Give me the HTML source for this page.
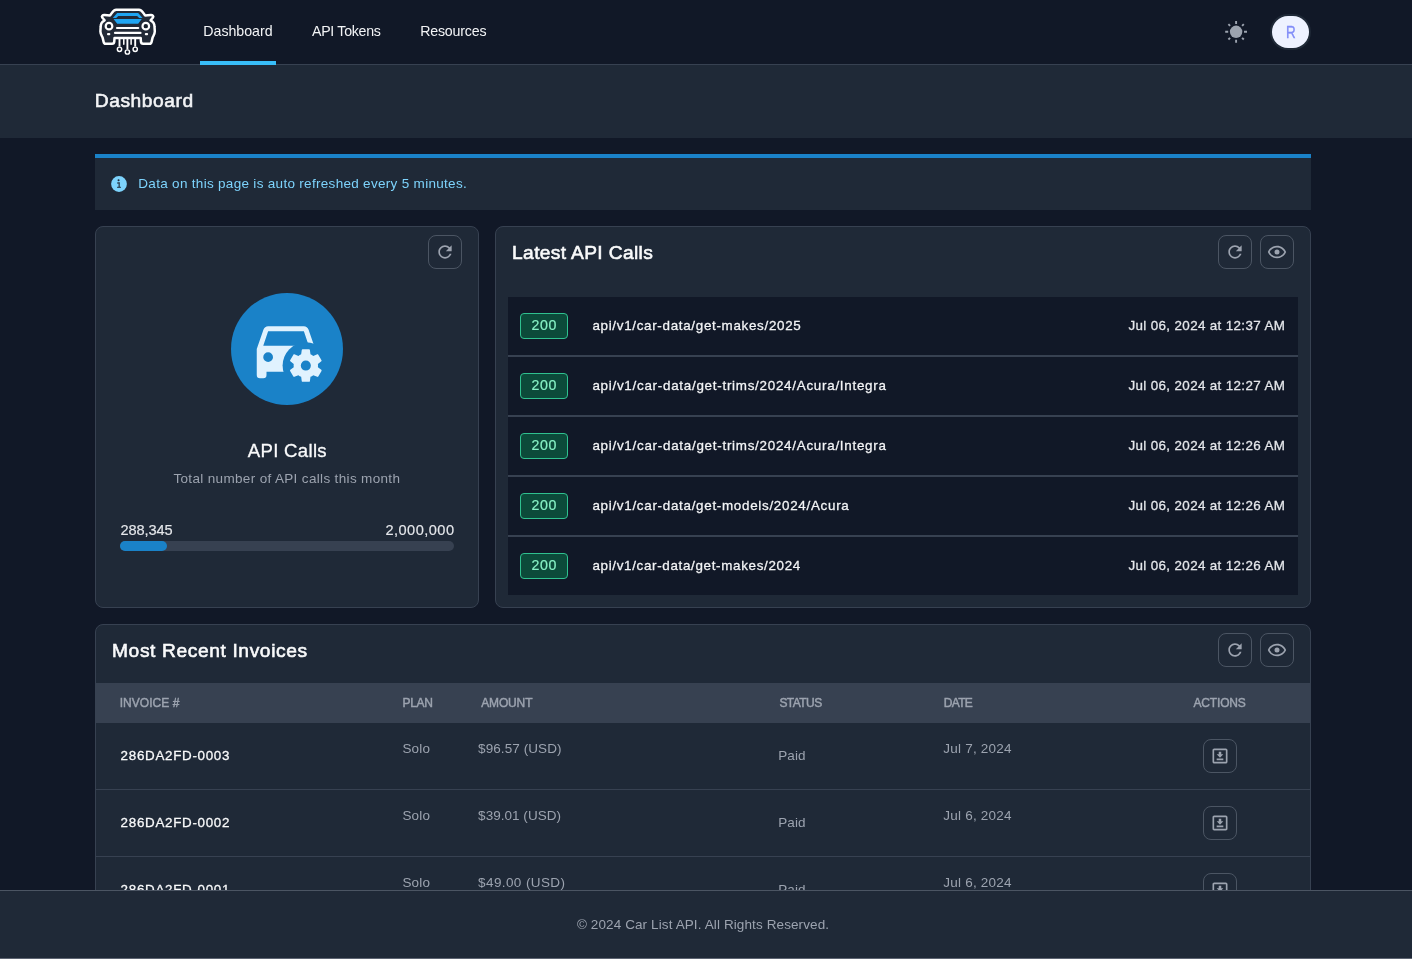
<!DOCTYPE html>
<html><head><meta charset="utf-8"><title>Dashboard</title>
<style>
*{box-sizing:border-box;margin:0;padding:0}
html,body{width:1412px;height:959px;overflow:hidden;background:#111827;font-family:"Liberation Sans",sans-serif;color:#f3f4f6}
body{position:relative}
.a{position:absolute}
.t{position:absolute;white-space:nowrap}
nav{position:absolute;left:0;top:0;width:1412px;height:65px;background:#111827;border-bottom:1px solid #374151}
.hdr{position:absolute;left:0;top:65px;width:1412px;height:73px;background:#1f2937}
.card{position:absolute;background:#1f2937;border:1px solid #374151;border-radius:8px}
.btn{position:absolute;width:34px;height:34px;border:1px solid #4b5563;border-radius:8px}
.btn svg{position:absolute;left:6px;top:6px;width:20px;height:20px;fill:#9ca3af}
.row{position:absolute;left:508px;width:790px;height:58px;background:#111827}
.div{position:absolute;left:508px;width:790px;height:2px;background:#374151}
.badge{position:absolute;left:520px;width:48px;height:26px;border:1px solid #2fc08f;background:#0c4a3a;border-radius:4px}
.hr{position:absolute;left:96px;width:1214px;height:1px;background:#374151}
footer{position:absolute;left:0;top:890px;width:1412px;height:69px;background:#1f2937;border-top:1px solid #4b5563;border-bottom:1px solid #5d6472;z-index:5}

</style></head><body>
<nav></nav>
<svg class="a" style="left:94px;top:4px" width="68" height="56" viewBox="0 0 68 56">
  <path d="M22.2 5.8H45C48 5.8 49.200 9 51.200 11.500L56.600 11.100C58.800 10.900 59.800 12.500 59 13.500L56.600 16.300C59 17.500 60.500 20 60.500 22.400L60.800 27.500C60.800 30 59.400 31.800 58.600 33.600L57.700 37.400C57.400 39 56.800 39.800 55.500 39.800H49.100C47.800 39.800 47 39 46.900 37.400L46.700 34H20.500L20.300 37.400C20.200 39 19.400 39.800 18.100 39.800H11.700C10.400 39.800 9.800 39 9.500 37.400L8.600 33.600C7.800 31.800 6.400 30 6.400 27.500L6.700 22.400C6.700 20 8.200 17.500 10.600 16.300L8.200 13.500C7.400 12.500 8.400 10.900 10.600 11.100L16 11.500C18 9 19.200 5.800 22.200 5.800Z" fill="#222a37" stroke="#fff" stroke-width="2.5" stroke-linejoin="round"/>
  <path d="M18.800 14L23.200 9H44.200L48.500 14L44.200 19.800H23.200Z" fill="#1fa5f2"/>
  <path d="M24.300 11.900H43.100L45.200 13.900H48.700V15.100H18.600V13.900H22.200Z" fill="#222a37"/>
  <circle cx="15" cy="22.150" r="3.300" fill="#18202b" stroke="#fff" stroke-width="2.200"/>
  <circle cx="51.800" cy="22.150" r="3.300" fill="#18202b" stroke="#fff" stroke-width="2.200"/>
  <rect x="21.900" y="22.900" width="23.400" height="2.200" rx="1.100" fill="#fff"/>
  <rect x="19.900" y="27.800" width="27.700" height="2.300" rx="1.150" fill="#fff"/>
  <rect x="13" y="29" width="3.300" height="2.300" rx="1" fill="#fff"/>
  <rect x="50.800" y="29" width="3.300" height="2.300" rx="1" fill="#fff"/>
  <g stroke="#fff" fill="none">
    <path d="M25.500 34V42.600M33.400 34V45.200M41.200 34V42.600" stroke-width="1.900"/>
    <path d="M29.800 34V40.200M37.100 34V40.200" stroke-width="1.500" stroke-linecap="round"/>
    <circle cx="25.500" cy="45.300" r="2.150" stroke-width="1.450"/>
    <circle cx="33.400" cy="48" r="2.150" stroke-width="1.450"/>
    <circle cx="41.200" cy="45.300" r="2.150" stroke-width="1.450"/>
  </g>
</svg>
<div class="a" style="left:200px;top:61px;width:76px;height:4px;background:#38bdf8"></div>
<!-- sun -->
<svg class="a" style="left:1224px;top:20px" width="24" height="24" viewBox="0 0 24 24">
  <circle cx="12.1" cy="11.8" r="6.2" fill="#9ca3af"/>
  <g stroke="#9ca3af" stroke-width="1.9">
    <path d="M12.1 0.9V3.9M12.1 19.7V22.7M1.2 11.8H4.2M20 11.8H23M4.4 4.1L6.1 5.8M18.1 17.8L19.8 19.5M4.4 19.5L6.1 17.8M18.1 5.8L19.8 4.1"/>
  </g>
</svg>
<!-- avatar -->
<div class="a" style="left:1270px;top:14px;width:41px;height:36px;border-radius:18px;background:#1f2937"></div>
<div class="a" style="left:1272px;top:16px;width:37px;height:32px;border-radius:16px;background:#eef2ff"></div>

<div class="hdr"></div>

<!-- alert -->
<div class="a" style="left:95px;top:154px;width:1216px;height:56px;background:#1f2937;border-top:4px solid #1a82c8"></div>
<svg class="a" style="left:111px;top:176px" width="16" height="16" viewBox="0 0 16 16">
  <circle cx="8" cy="8" r="7.9" fill="#7dd3fc"/>
  <g fill="#1f2937"><circle cx="7.55" cy="4.3" r="1"/><path d="M7.4 6.3h1.6v4.7h-1.6z" opacity=".72"/><path d="M6 6.5h2.2v1h-2.200z"/><path d="M6.100 10.800h3.800v1h-3.800z"/></g>
</svg>

<!-- left card -->
<div class="card" style="left:95px;top:226px;width:384px;height:382px"></div>
<div class="btn" style="left:428px;top:235px"><svg viewBox="0 0 24 24"><path d="M17.65 6.35C16.2 4.9 14.21 4 12 4c-4.42 0-7.99 3.58-7.99 8s3.57 8 7.99 8c3.73 0 6.84-2.55 7.73-6h-2.08c-.82 2.33-3.04 4-5.65 4-3.31 0-6-2.690-6-6s2.690-6 6-6c1.660 0 3.140.69 4.220 1.780L13 11h7V4l-2.350 2.350z"/></svg></div>
<div class="a" style="left:231px;top:293px;width:112px;height:112px;border-radius:56px;background:#1a82c8"></div>
<svg class="a" style="left:247.3px;top:310.2px" width="78" height="78" viewBox="0 0 24 24">
  <defs><mask id="cm"><rect width="24" height="24" fill="#fff"/><circle cx="18.1" cy="17.1" r="7.15" fill="#000"/></mask></defs>
  <path mask="url(#cm)" fill="#e0f2fe" fill-rule="evenodd" d="M5,11L6.5,6.500H17.500L19,11M17.500,16A1.500,1.500 0 0,1 16,14.500A1.500,1.500 0 0,1 17.500,13A1.500,1.500 0 0,1 19,14.500A1.500,1.500 0 0,1 17.500,16M6.500,16A1.500,1.500 0 0,1 5,14.500A1.500,1.500 0 0,1 6.500,13A1.500,1.500 0 0,1 8,14.500A1.500,1.500 0 0,1 6.500,16M18.920,6C18.720,5.420 18.160,5 17.500,5H6.500C5.840,5 5.280,5.420 5.080,6L3,12V20A1,1 0 0,0 4,21H5A1,1 0 0,0 6,20V19H18V20A1,1 0 0,0 19,21H20A1,1 0 0,0 21,20V12L18.920,6Z"/>
  <g transform="translate(12.1 11.1) scale(0.5)">
    <path fill="#e0f2fe" fill-rule="evenodd" d="M12,15.100A3.100,3.100 0 0,1 8.900,12A3.100,3.100 0 0,1 12,8.900A3.100,3.100 0 0,1 15.100,12A3.100,3.100 0 0,1 12,15.100M19.430,12.970C19.470,12.650 19.500,12.330 19.500,12C19.500,11.670 19.470,11.340 19.430,11L21.540,9.370C21.730,9.220 21.780,8.950 21.660,8.730L19.660,5.270C19.540,5.050 19.270,4.960 19.050,5.050L16.560,6.050C16.040,5.660 15.500,5.320 14.870,5.070L14.500,2.420C14.460,2.180 14.250,2 14,2H10C9.750,2 9.540,2.180 9.500,2.420L9.130,5.070C8.500,5.320 7.960,5.660 7.440,6.050L4.950,5.050C4.730,4.960 4.460,5.050 4.340,5.270L2.340,8.730C2.210,8.950 2.270,9.220 2.460,9.370L4.570,11C4.530,11.340 4.500,11.670 4.500,12C4.500,12.330 4.530,12.650 4.570,12.970L2.460,14.630C2.270,14.780 2.210,15.050 2.340,15.270L4.340,18.730C4.460,18.950 4.730,19.030 4.950,18.950L7.440,17.940C7.960,18.340 8.500,18.680 9.130,18.930L9.500,21.580C9.540,21.820 9.750,22 10,22H14C14.250,22 14.460,21.820 14.500,21.580L14.870,18.930C15.500,18.670 16.040,18.340 16.560,17.940L19.050,18.950C19.270,19.030 19.540,18.950 19.660,18.730L21.660,15.270C21.780,15.050 21.730,14.780 21.540,14.630L19.430,12.970Z"/>
  </g>
</svg>
<div class="a" style="left:120px;top:541px;width:334px;height:10px;border-radius:5px;background:#374151"></div>
<div class="a" style="left:120px;top:541px;width:47px;height:10px;border-radius:5px;background:#1a82c8"></div>

<!-- right card -->
<div class="card" style="left:495px;top:226px;width:816px;height:382px"></div>
<div class="btn" style="left:1218px;top:235px"><svg viewBox="0 0 24 24"><path d="M17.65 6.35C16.2 4.9 14.21 4 12 4c-4.42 0-7.99 3.58-7.99 8s3.57 8 7.99 8c3.73 0 6.84-2.55 7.73-6h-2.08c-.82 2.33-3.04 4-5.65 4-3.31 0-6-2.690-6-6s2.690-6 6-6c1.660 0 3.140.69 4.220 1.780L13 11h7V4l-2.350 2.350z"/></svg></div>
<div class="btn" style="left:1260px;top:235px"><svg viewBox="0 0 24 24"><path d="M12,9A3,3 0 0,1 15,12A3,3 0 0,1 12,15A3,3 0 0,1 9,12A3,3 0 0,1 12,9M12,4.500C17,4.500 21.270,7.610 23,12C21.270,16.390 17,19.500 12,19.500C7,19.500 2.730,16.390 1,12C2.730,7.610 7,4.500 12,4.500M3.180,12C4.830,15.360 8.240,17.500 12,17.500C15.760,17.500 19.170,15.360 20.820,12C19.170,8.640 15.760,6.500 12,6.500C8.240,6.500 4.830,8.640 3.180,12Z"/></svg></div>
<div class="a" style="left:508px;top:297px;width:790px;height:298px;background:#374151"></div>
<div class="row" style="top:297px"></div><div class="row" style="top:357px"></div><div class="row" style="top:417px"></div><div class="row" style="top:477px"></div><div class="row" style="top:537px"></div>
<div class="badge" style="top:313px"></div><div class="badge" style="top:373px"></div><div class="badge" style="top:433px"></div><div class="badge" style="top:493px"></div><div class="badge" style="top:553px"></div>

<!-- invoices -->
<div class="card" style="left:95px;top:624px;width:1216px;height:400px"></div>
<div class="btn" style="left:1218px;top:633px"><svg viewBox="0 0 24 24"><path d="M17.65 6.35C16.2 4.9 14.21 4 12 4c-4.42 0-7.99 3.58-7.99 8s3.57 8 7.99 8c3.73 0 6.84-2.55 7.73-6h-2.08c-.82 2.33-3.04 4-5.65 4-3.31 0-6-2.690-6-6s2.690-6 6-6c1.660 0 3.140.69 4.220 1.780L13 11h7V4l-2.350 2.350z"/></svg></div>
<div class="btn" style="left:1260px;top:633px"><svg viewBox="0 0 24 24"><path d="M12,9A3,3 0 0,1 15,12A3,3 0 0,1 12,15A3,3 0 0,1 9,12A3,3 0 0,1 12,9M12,4.500C17,4.500 21.270,7.610 23,12C21.270,16.390 17,19.500 12,19.500C7,19.500 2.730,16.390 1,12C2.730,7.610 7,4.500 12,4.500M3.180,12C4.830,15.360 8.240,17.500 12,17.500C15.760,17.500 19.170,15.360 20.820,12C19.170,8.640 15.760,6.500 12,6.500C8.240,6.500 4.830,8.640 3.180,12Z"/></svg></div>
<div class="a" style="left:96px;top:683px;width:1214px;height:40px;background:#374151"></div>
<div class="hr" style="top:789px"></div><div class="hr" style="top:856px"></div>
<div class="btn" style="left:1203px;top:739px"><svg viewBox="0 0 24 24"><path d="M8 17V15H16V17H8M16 10L12 14L8 10H10.500V7H13.500V10H16M5 3H19C20.110 3 21 3.900 21 5V19C21 20.110 20.110 21 19 21H5C3.900 21 3 20.110 3 19V5C3 3.900 3.900 3 5 3M5 5V19H19V5H5Z"/></svg></div>
<div class="btn" style="left:1203px;top:806px"><svg viewBox="0 0 24 24"><path d="M8 17V15H16V17H8M16 10L12 14L8 10H10.500V7H13.500V10H16M5 3H19C20.110 3 21 3.900 21 5V19C21 20.110 20.110 21 19 21H5C3.900 21 3 20.110 3 19V5C3 3.900 3.900 3 5 3M5 5V19H19V5H5Z"/></svg></div>
<div class="btn" style="left:1203px;top:873px"><svg viewBox="0 0 24 24"><path d="M8 17V15H16V17H8M16 10L12 14L8 10H10.500V7H13.500V10H16M5 3H19C20.110 3 21 3.900 21 5V19C21 20.110 20.110 21 19 21H5C3.900 21 3 20.110 3 19V5C3 3.900 3.900 3 5 3M5 5V19H19V5H5Z"/></svg></div>

<div class="a" style="left:0;top:0;width:1412px;height:959px;will-change:transform;z-index:1"><div class="t" style="left:203.3px;top:24.3px;font-size:14.2px;line-height:14.2px;font-weight:400;color:#f3f4f6;letter-spacing:-0.015px;">Dashboard</div>
<div class="t" style="left:312.0px;top:24.3px;font-size:14.2px;line-height:14.2px;font-weight:400;color:#f3f4f6;letter-spacing:-0.296px;">API Tokens</div>
<div class="t" style="left:420.2px;top:24.3px;font-size:14.2px;line-height:14.2px;font-weight:400;color:#f3f4f6;letter-spacing:-0.190px;">Resources</div>
<div class="t" style="left:1286.4px;top:24.7px;font-size:16px;line-height:16px;font-weight:400;color:#818cf8;letter-spacing:0.000px;transform-origin:0 0;transform:scaleX(0.84);-webkit-text-stroke:0.35px #818cf8;">R</div>
<div class="t" style="left:94.8px;top:91.1px;font-size:19.2px;line-height:19.2px;font-weight:400;color:#f3f4f6;letter-spacing:0.551px;-webkit-text-stroke:0.6px #f3f4f6;">Dashboard</div>
<div class="t" style="left:138.3px;top:176.6px;font-size:13.5px;line-height:13.5px;font-weight:400;color:#7dd3fc;letter-spacing:0.304px;">Data on this page is auto refreshed every 5 minutes.</div>
<div class="t" style="left:247.8px;top:442.2px;font-size:18.6px;line-height:18.6px;font-weight:400;color:#f9fafb;letter-spacing:0.292px;-webkit-text-stroke:0.3px #f9fafb;">API Calls</div>
<div class="t" style="left:173.4px;top:471.6px;font-size:13.5px;line-height:13.5px;font-weight:400;color:#9ca3af;letter-spacing:0.342px;">Total number of API calls this month</div>
<div class="t" style="left:120.5px;top:522.6px;font-size:14.6px;line-height:14.6px;font-weight:400;color:#e5e7eb;letter-spacing:-0.098px;-webkit-text-stroke:0.15px #e5e7eb;">288,345</div>
<div class="t" style="left:385.4px;top:522.6px;font-size:14.6px;line-height:14.6px;font-weight:400;color:#e5e7eb;letter-spacing:0.468px;-webkit-text-stroke:0.15px #e5e7eb;">2,000,000</div>
<div class="t" style="left:512.1px;top:242.6px;font-size:19.2px;line-height:19.2px;font-weight:400;color:#f9fafb;letter-spacing:0.346px;-webkit-text-stroke:0.6px #f9fafb;">Latest API Calls</div>
<div class="t" style="left:531.4px;top:318.1px;font-size:14.2px;line-height:14.2px;font-weight:400;color:#86efc4;letter-spacing:0.660px;-webkit-text-stroke:0.2px #86efc4;">200</div>
<div class="t" style="left:592.4px;top:318.5px;font-size:13.4px;line-height:13.4px;font-weight:400;color:#f3f4f6;letter-spacing:0.691px;-webkit-text-stroke:0.28px #f3f4f6;">api/v1/car-data/get-makes/2025</div>
<div class="t" style="left:1128.5px;top:318.5px;font-size:13.4px;line-height:13.4px;font-weight:400;color:#e5e7eb;letter-spacing:0.356px;-webkit-text-stroke:0.28px #e5e7eb;">Jul 06, 2024 at 12:37 AM</div>
<div class="t" style="left:531.4px;top:378.1px;font-size:14.2px;line-height:14.2px;font-weight:400;color:#86efc4;letter-spacing:0.660px;-webkit-text-stroke:0.2px #86efc4;">200</div>
<div class="t" style="left:592.4px;top:378.5px;font-size:13.4px;line-height:13.4px;font-weight:400;color:#f3f4f6;letter-spacing:0.734px;-webkit-text-stroke:0.28px #f3f4f6;">api/v1/car-data/get-trims/2024/Acura/Integra</div>
<div class="t" style="left:1128.5px;top:378.5px;font-size:13.4px;line-height:13.4px;font-weight:400;color:#e5e7eb;letter-spacing:0.356px;-webkit-text-stroke:0.28px #e5e7eb;">Jul 06, 2024 at 12:27 AM</div>
<div class="t" style="left:531.4px;top:438.1px;font-size:14.2px;line-height:14.2px;font-weight:400;color:#86efc4;letter-spacing:0.660px;-webkit-text-stroke:0.2px #86efc4;">200</div>
<div class="t" style="left:592.4px;top:438.5px;font-size:13.4px;line-height:13.4px;font-weight:400;color:#f3f4f6;letter-spacing:0.734px;-webkit-text-stroke:0.28px #f3f4f6;">api/v1/car-data/get-trims/2024/Acura/Integra</div>
<div class="t" style="left:1128.5px;top:438.5px;font-size:13.4px;line-height:13.4px;font-weight:400;color:#e5e7eb;letter-spacing:0.356px;-webkit-text-stroke:0.28px #e5e7eb;">Jul 06, 2024 at 12:26 AM</div>
<div class="t" style="left:531.4px;top:498.1px;font-size:14.2px;line-height:14.2px;font-weight:400;color:#86efc4;letter-spacing:0.660px;-webkit-text-stroke:0.2px #86efc4;">200</div>
<div class="t" style="left:592.4px;top:498.5px;font-size:13.4px;line-height:13.4px;font-weight:400;color:#f3f4f6;letter-spacing:0.712px;-webkit-text-stroke:0.28px #f3f4f6;">api/v1/car-data/get-models/2024/Acura</div>
<div class="t" style="left:1128.5px;top:498.5px;font-size:13.4px;line-height:13.4px;font-weight:400;color:#e5e7eb;letter-spacing:0.356px;-webkit-text-stroke:0.28px #e5e7eb;">Jul 06, 2024 at 12:26 AM</div>
<div class="t" style="left:531.4px;top:558.1px;font-size:14.2px;line-height:14.2px;font-weight:400;color:#86efc4;letter-spacing:0.660px;-webkit-text-stroke:0.2px #86efc4;">200</div>
<div class="t" style="left:592.4px;top:558.5px;font-size:13.4px;line-height:13.4px;font-weight:400;color:#f3f4f6;letter-spacing:0.674px;-webkit-text-stroke:0.28px #f3f4f6;">api/v1/car-data/get-makes/2024</div>
<div class="t" style="left:1128.5px;top:558.5px;font-size:13.4px;line-height:13.4px;font-weight:400;color:#e5e7eb;letter-spacing:0.356px;-webkit-text-stroke:0.28px #e5e7eb;">Jul 06, 2024 at 12:26 AM</div>
<div class="t" style="left:112.0px;top:641.0px;font-size:19.2px;line-height:19.2px;font-weight:400;color:#f9fafb;letter-spacing:0.614px;-webkit-text-stroke:0.6px #f9fafb;">Most Recent Invoices</div>
<div class="t" style="left:119.7px;top:696.8px;font-size:12px;line-height:12px;font-weight:400;color:#9ca3af;letter-spacing:0.047px;-webkit-text-stroke:0.45px #9ca3af;">INVOICE #</div>
<div class="t" style="left:402.6px;top:696.8px;font-size:12px;line-height:12px;font-weight:400;color:#9ca3af;letter-spacing:-0.344px;-webkit-text-stroke:0.45px #9ca3af;">PLAN</div>
<div class="t" style="left:481.2px;top:696.8px;font-size:12px;line-height:12px;font-weight:400;color:#9ca3af;letter-spacing:-0.143px;-webkit-text-stroke:0.45px #9ca3af;">AMOUNT</div>
<div class="t" style="left:779.4px;top:696.8px;font-size:12px;line-height:12px;font-weight:400;color:#9ca3af;letter-spacing:-0.541px;-webkit-text-stroke:0.45px #9ca3af;">STATUS</div>
<div class="t" style="left:943.8px;top:696.8px;font-size:12px;line-height:12px;font-weight:400;color:#9ca3af;letter-spacing:-0.720px;-webkit-text-stroke:0.45px #9ca3af;">DATE</div>
<div class="t" style="left:1193.4px;top:696.8px;font-size:12px;line-height:12px;font-weight:400;color:#9ca3af;letter-spacing:-0.147px;-webkit-text-stroke:0.45px #9ca3af;">ACTIONS</div>
<div class="t" style="left:120.6px;top:748.6px;font-size:13.4px;line-height:13.4px;font-weight:400;color:#f9fafb;letter-spacing:0.698px;-webkit-text-stroke:0.28px #f9fafb;">286DA2FD-0003</div>
<div class="t" style="left:402.4px;top:741.8px;font-size:13.5px;line-height:13.5px;font-weight:400;color:#9ca3af;letter-spacing:0.229px;">Solo</div>
<div class="t" style="left:478.1px;top:741.8px;font-size:13.5px;line-height:13.5px;font-weight:400;color:#9ca3af;letter-spacing:0.078px;">$96.57 (USD)</div>
<div class="t" style="left:778.2px;top:748.9px;font-size:13.5px;line-height:13.5px;font-weight:400;color:#9ca3af;letter-spacing:0.096px;">Paid</div>
<div class="t" style="left:943.3px;top:741.8px;font-size:13.5px;line-height:13.5px;font-weight:400;color:#9ca3af;letter-spacing:0.216px;">Jul 7, 2024</div>
<div class="t" style="left:120.6px;top:815.6px;font-size:13.4px;line-height:13.4px;font-weight:400;color:#f9fafb;letter-spacing:0.698px;-webkit-text-stroke:0.28px #f9fafb;">286DA2FD-0002</div>
<div class="t" style="left:402.4px;top:808.8px;font-size:13.5px;line-height:13.5px;font-weight:400;color:#9ca3af;letter-spacing:0.229px;">Solo</div>
<div class="t" style="left:478.1px;top:808.8px;font-size:13.5px;line-height:13.5px;font-weight:400;color:#9ca3af;letter-spacing:0.033px;">$39.01 (USD)</div>
<div class="t" style="left:778.2px;top:815.9px;font-size:13.5px;line-height:13.5px;font-weight:400;color:#9ca3af;letter-spacing:0.096px;">Paid</div>
<div class="t" style="left:943.3px;top:808.8px;font-size:13.5px;line-height:13.5px;font-weight:400;color:#9ca3af;letter-spacing:0.216px;">Jul 6, 2024</div>
<div class="t" style="left:120.6px;top:882.6px;font-size:13.4px;line-height:13.4px;font-weight:400;color:#f9fafb;letter-spacing:0.698px;-webkit-text-stroke:0.28px #f9fafb;">286DA2FD-0001</div>
<div class="t" style="left:402.4px;top:875.8px;font-size:13.5px;line-height:13.5px;font-weight:400;color:#9ca3af;letter-spacing:0.229px;">Solo</div>
<div class="t" style="left:478.1px;top:875.8px;font-size:13.5px;line-height:13.5px;font-weight:400;color:#9ca3af;letter-spacing:0.396px;">$49.00 (USD)</div>
<div class="t" style="left:778.2px;top:882.9px;font-size:13.5px;line-height:13.5px;font-weight:400;color:#9ca3af;letter-spacing:0.096px;">Paid</div>
<div class="t" style="left:943.3px;top:875.8px;font-size:13.5px;line-height:13.5px;font-weight:400;color:#9ca3af;letter-spacing:0.216px;">Jul 6, 2024</div></div>
<footer></footer>
<div class="a" style="left:0;top:890px;width:1412px;height:69px;will-change:transform;z-index:6"><div class="t" style="left:576.9px;top:27.6px;font-size:13.5px;line-height:13.5px;font-weight:400;color:#9ca3af;letter-spacing:0.109px;">© 2024 Car List API. All Rights Reserved.</div></div>

</body></html>
